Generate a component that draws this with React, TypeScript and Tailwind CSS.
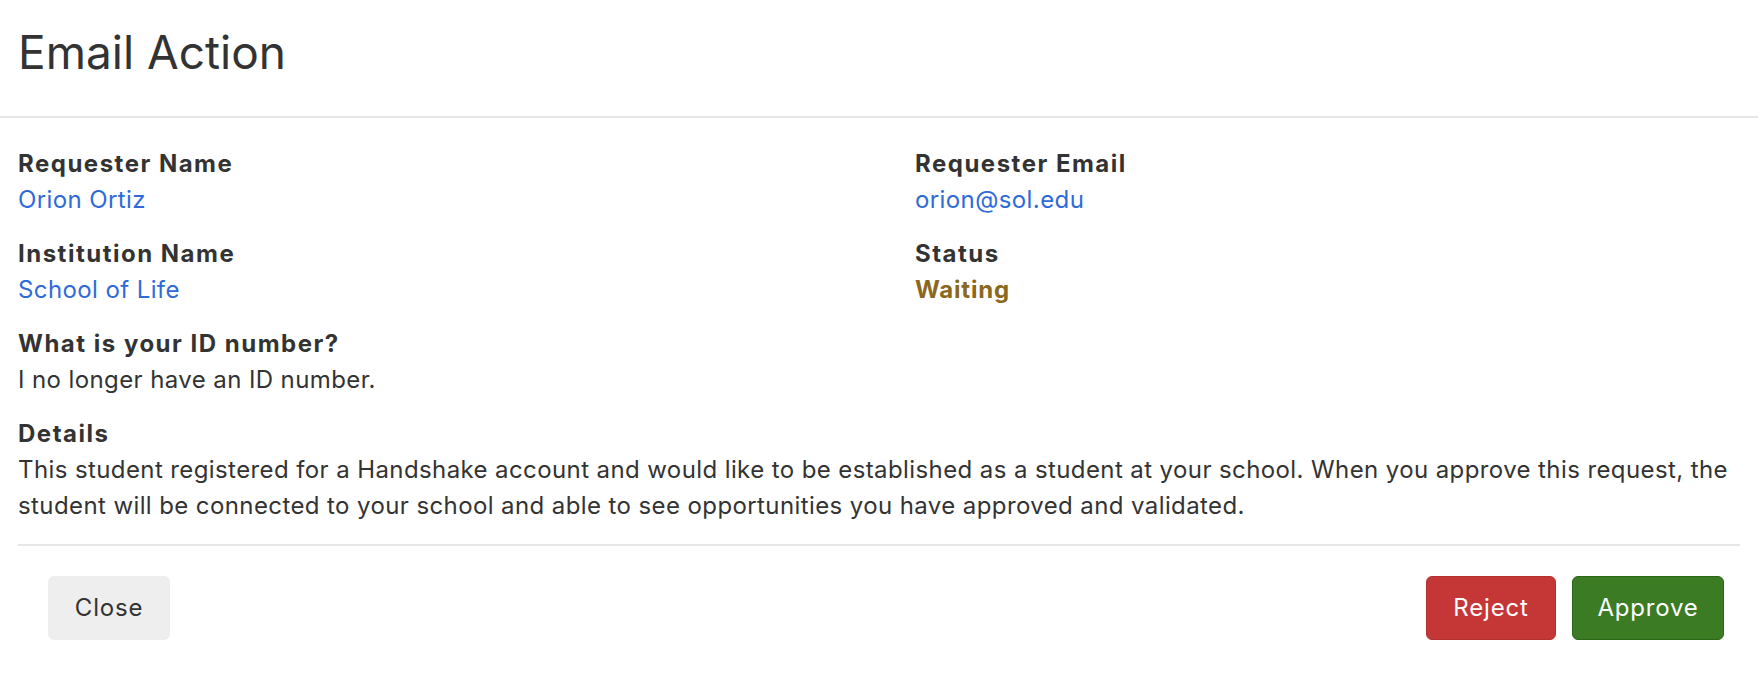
import React from "react";

const font = { fontFamily: "Inter, 'Noto Sans', sans-serif" };

function Field({
  label,
  value,
  valueClass = "text-[#2f6ad9]",
}: {
  label: string;
  value: string;
  valueClass?: string;
}) {
  return (
    <div className="mb-[18px]">
      <div className="font-bold tracking-[1.5px] text-[#333333]">{label}</div>
      <div className={valueClass}>{value}</div>
    </div>
  );
}

export default function App() {
  return (
    <div className="min-h-[694px] bg-white text-[#333333]" style={font}>
      {/* Header */}
      <div className="h-[118px] border-b-2 border-[#e6e6e6] px-[18px] pt-[22px]">
        <h1 className="text-[46px] font-normal leading-[60px] text-[#333333]">
          Email Action
        </h1>
      </div>

      {/* Body */}
      <div className="px-[18px] pt-[28px] text-[24px] leading-[36px] tracking-[0.4px]">
        <div className="grid grid-cols-2 gap-x-[72px]">
          <Field label="Requester Name" value="Orion Ortiz" />
          <Field label="Requester Email" value="orion@sol.edu" />
          <Field label="Institution Name" value="School of Life" />
          <Field
            label="Status"
            value="Waiting"
            valueClass="font-bold tracking-[0.8px] text-[#8a6820]"
          />
        </div>
        <Field
          label="What is your ID number?"
          value="I no longer have an ID number."
          valueClass="text-[#333333]"
        />
        <div className="mb-[20px]">
          <div className="font-bold tracking-[1.5px]">Details</div>
          <p className="-mr-[8px]">
            This student registered for a Handshake account and would like to
            be established as a student at your school. When you approve this
            request, the student will be connected to your school and able to
            see opportunities you have approved and validated.
          </p>
        </div>
        <div className="border-t-2 border-[#e6e6e6]" />
      </div>

      {/* Footer */}
      <div className="flex items-center justify-between pl-[48px] pr-[34px] pt-[30px] text-[24px] tracking-[0.8px]">
        <button className="h-[64px] w-[122px] rounded-[6px] bg-[#eeeeee] text-[#333333]">
          Close
        </button>
        <div className="flex gap-[16px]">
          <button className="h-[64px] w-[130px] rounded-[6px] border border-[#b53131] bg-[#c53737] text-white">
            Reject
          </button>
          <button className="h-[64px] w-[152px] rounded-[6px] border border-[#2c6619] bg-[#3a7b23] text-white">
            Approve
          </button>
        </div>
      </div>
    </div>
  );
}
